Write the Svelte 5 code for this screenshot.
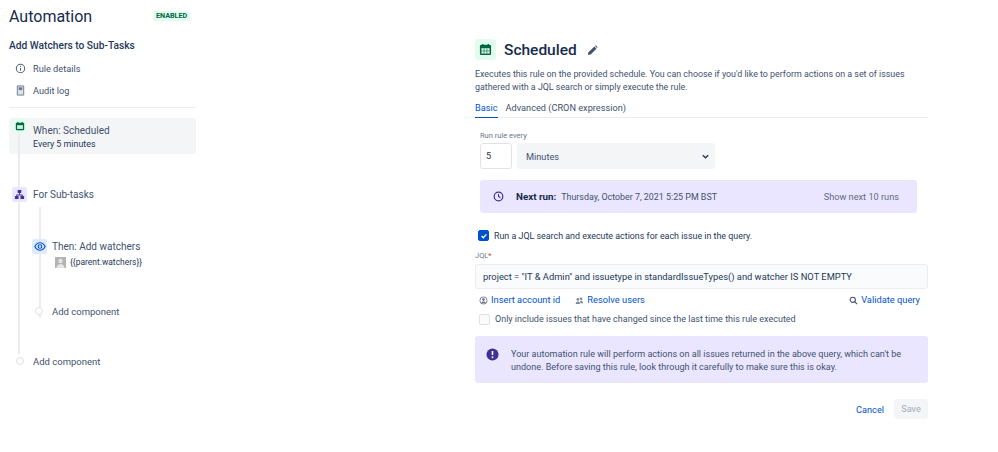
<script>
  const tabs = ['Basic', 'Advanced (CRON expression)'];
</script>

<div class="page">
  <aside class="side">
    <header class="head">
      <h1>Automation</h1>
      <span class="badge">ENABLED</span>
    </header>
    <h2>Add Watchers to Sub-Tasks</h2>
    <div class="nav">
      <div class="navrow">
        <svg class="navicon" viewBox="0 0 12 12" width="11" height="11"><circle cx="6" cy="6" r="4.600" fill="none" stroke="#505f79" stroke-width="1.100"/><path d="M6 5.400v3M6 3.400v1" stroke="#505f79" stroke-width="1.100"/></svg>
        <span>Rule details</span>
      </div>
      <div class="navrow">
        <svg class="navicon" viewBox="0 0 12 12" width="11" height="11"><path d="M2.500 1h7v10h-7z" fill="#dfe1e6" stroke="#6b778c" stroke-width="1"/><path d="M4 2.500h4v3H4z" fill="#6b778c"/></svg>
        <span>Audit log</span>
      </div>
    </div>
    <hr />
    <div class="trigger">
      <span class="tile green">
        <svg viewBox="0 0 12 12" width="10" height="10"><rect x="1" y="2" width="10" height="9" rx="1" fill="#006644"/><rect x="2.500" y="5" width="7" height="4.500" fill="#c9f3e0"/><path d="M3.500 1v2M8.500 1v2" stroke="#006644" stroke-width="1.200"/></svg>
      </span>
      <div class="trigtext">
        <div class="t1">When: Scheduled</div>
        <div class="t2">Every 5 minutes</div>
      </div>
      <span class="stem"></span>
    </div>
    <div class="tree">
      <div class="node branch">
        <span class="tile purple">
          <svg viewBox="0 0 12 12" width="11" height="11" fill="#403294"><rect x="4" y="1" width="4" height="3.400" rx=".5"/><rect x="1" y="7.600" width="4" height="3.400" rx=".5"/><rect x="7" y="7.600" width="4" height="3.400" rx=".5"/><path d="M5.500 4h1v2h3v2h-1V7h-5v1h-1V6h3z"/></svg>
        </span>
        <span class="t1">For Sub-tasks</span>
      </div>
      <div class="inner">
        <div class="node then">
          <span class="tile blue">
            <svg viewBox="0 0 14 12" width="12" height="11"><path d="M1 6c1.500-3 3.600-4.400 6-4.400S11.500 3 13 6c-1.500 3-3.600 4.400-6 4.400S2.500 9 1 6z" fill="none" stroke="#0052cc" stroke-width="1.300"/><circle cx="7" cy="6" r="2.100" fill="none" stroke="#0052cc" stroke-width="1.300"/></svg>
          </span>
          <div>
            <div class="t1">Then: Add watchers</div>
            <div class="watch">
              <span class="avatar">
                <svg viewBox="0 0 11 11" width="11" height="11"><rect width="11" height="11" fill="#b3b3b3"/><circle cx="5.500" cy="4" r="2.200" fill="#e4e4e4"/><path d="M1.500 11c.3-3 2-4 4-4s3.700 1 4 4z" fill="#e4e4e4"/></svg>
              </span>
              <span>{'{{parent.watchers}}'}</span>
            </div>
          </div>
        </div>
        <div class="add add-inner"><span class="dot"></span><span>Add component</span></div>
      </div>
      <div class="add add-outer"><span class="dot"></span><span>Add component</span></div>
    </div>
  </aside>

  <main class="main">
    <div class="title">
      <span class="bigtile">
        <svg viewBox="0 0 14 14" width="13" height="13"><rect x="1" y="2" width="12" height="11" rx="1.500" fill="#006644"/><rect x="2.600" y="5.600" width="8.800" height="5.800" fill="#d6f5e6"/><path d="M4 1v2.500M10 1v2.500" stroke="#006644" stroke-width="1.400"/><path d="M2.600 8.500h8.800M5.500 5.600v5.800M8.500 5.600v5.800" stroke="#006644" stroke-width=".6"/></svg>
      </span>
      <span class="titletext">Scheduled</span>
      <svg class="pencil" viewBox="0 0 12 12" width="11" height="11"><path d="M1 11l.7-3L8 1.700 10.300 4 4 10.300z" fill="#42526e"/><path d="M8.800 1l.7-.6 2.100 2.100-.7.800z" fill="#42526e"/></svg>
    </div>
    <p class="desc">Executes this rule on the provided schedule. You can choose if you'd like to perform actions on a set of issues gathered with a JQL search or simply execute the rule.</p>
    <nav class="tabs">
      {#each tabs as tab, i}
        <span class="tab" class:active={i === 0}>{tab}</span>
      {/each}
    </nav>

    <div class="form">
      <div class="lbl">Run rule every</div>
      <div class="runrow">
        <div class="num">5</div>
        <div class="select">
          <span>Minutes</span>
          <svg viewBox="0 0 10 10" width="9" height="9"><path d="M2 3.500 5 6.500l3-3" fill="none" stroke="#253858" stroke-width="1.500"/></svg>
        </div>
      </div>
      <div class="nextrun">
        <svg viewBox="0 0 12 12" width="11" height="11"><circle cx="6" cy="6" r="4.700" fill="none" stroke="#403294" stroke-width="1.300"/><path d="M6 3.200V6l2 1.300" fill="none" stroke="#403294" stroke-width="1.200"/></svg>
        <b>Next run:</b>
        <span class="date">Thursday, October 7, 2021 5:25 PM BST</span>
        <span class="show">Show next 10 runs</span>
      </div>
    </div>

    <label class="check first">
      <span class="box on">
        <svg viewBox="0 0 10 10" width="8" height="8"><path d="M2 5l2.200 2.200L8 3" fill="none" stroke="#fff" stroke-width="1.600"/></svg>
      </span>
      <span>Run a JQL search and execute actions for each issue in the query.</span>
    </label>
    <div class="lbl jql">JQL<em>*</em></div>
    <div class="input">project = "IT &amp; Admin" and issuetype in standardIssueTypes() and watcher IS NOT EMPTY</div>
    <div class="links">
      <span class="link">
        <svg viewBox="0 0 10 10" width="9" height="9"><circle cx="5" cy="5" r="4" fill="none" stroke="#6b778c" stroke-width="1"/><circle cx="5" cy="4" r="1.500" fill="#6b778c"/><path d="M2.500 8c.4-1.300 1.300-1.800 2.500-1.800S7.100 6.700 7.500 8z" fill="#6b778c"/></svg>
        Insert account id
      </span>
      <span class="link">
        <svg viewBox="0 0 10 10" width="9" height="9" fill="#7a869a"><circle cx="3.200" cy="3.800" r="1.500"/><circle cx="6.800" cy="3" r="1.400"/><path d="M.8 9c0-2 1-3 2.400-3s2.400 1 2.400 3z"/><path d="M5.500 5.500c.6-.5 2.800-.8 3.700 2.500H6.300z"/></svg>
        Resolve users
      </span>
      <span class="link right">
        <svg viewBox="0 0 10 10" width="9" height="9"><circle cx="4.200" cy="4.200" r="2.900" fill="none" stroke="#42526e" stroke-width="1.200"/><path d="M6.300 6.300 9 9" stroke="#42526e" stroke-width="1.300"/></svg>
        Validate query
      </span>
    </div>
    <label class="check second">
      <span class="box"></span>
      <span>Only include issues that have changed since the last time this rule executed</span>
    </label>
    <div class="warn">
      <svg viewBox="0 0 14 14" width="13" height="13"><circle cx="7" cy="7" r="6.500" fill="#403294"/><path d="M7 3.200v4.300" stroke="#fff" stroke-width="1.700"/><circle cx="7" cy="10" r="1" fill="#fff"/></svg>
      <p>Your automation rule will perform actions on all issues returned in the above query, which can't be undone. Before saving this rule, look through it carefully to make sure this is okay.</p>
    </div>
    <div class="actions">
      <span class="cancel">Cancel</span>
      <span class="save">Save</span>
    </div>
  </main>
</div>

<style>
  :global(body) {
    margin: 0;
    background: #fff;
  }
  .page {
    width: 998px;
    height: 452px;
    box-sizing: border-box;
    display: grid;
    grid-template-columns: 187px 453px;
    column-gap: 279px;
    padding-left: 9px;
    font-family: Roboto, "Open Sans", sans-serif;
    font-size: 9.200px;
    color: #253858;
    overflow: hidden;
  }
  .head {
    display: flex;
    align-items: center;
    height: 33px;
  }
  h1 {
    margin: 0;
    width: 144px;
    font-size: 16px;
    font-weight: 400;
    color: #172b4d;
    line-height: 33px;
  }
  .badge {
    background: #e3fcef;
    color: #006644;
    font-size: 7.200px;
    font-weight: 700;
    padding: 1px 3px;
    border-radius: 2px;
    line-height: 8px;
    margin-top: -2px;
  }
  h2 {
    margin: 4px 0 0;
    font-size: 10.200px;
    font-weight: 500;
    color: #253858;
    line-height: 17px;
  }
  .nav {
    margin-top: 3px;
  }
  .navrow {
    display: flex;
    align-items: center;
    height: 22px;
    padding-left: 6px;
    gap: 7px;
    color: #42526e;
  }
  hr {
    border: 0;
    border-top: 1px solid #ebecf0;
    margin: 6px 0 10px;
  }
  .trigger {
    position: relative;
    display: flex;
    height: 36px;
    background: #f4f5f7;
    border-radius: 3px;
    padding-left: 3px;
    gap: 6px;
  }
  .tile {
    flex: none;
    width: 15px;
    height: 15px;
    border-radius: 2px;
    display: flex;
    align-items: center;
    justify-content: center;
    z-index: 1;
  }
  .green { background: #e3fcef; }
  .purple { background: #eae6ff; }
  .blue { background: #deebff; }
  .trigtext {
    padding-top: 5px;
  }
  .t1 {
    font-size: 10px;
    line-height: 15px;
    color: #42526e;
  }
  .t2 {
    font-size: 8.900px;
    line-height: 12px;
    color: #253858;
  }
  .stem {
    position: absolute;
    left: 9px;
    top: 15px;
    height: 21px;
    width: 2px;
    background: #ebecf0;
  }
  .tree {
    position: relative;
    padding-top: 32px;
  }
  .tree::before {
    content: "";
    position: absolute;
    left: 9px;
    top: 0;
    bottom: 8px;
    width: 2px;
    background: #ebecf0;
  }
  .node {
    display: flex;
    gap: 5px;
  }
  .branch {
    padding-left: 3px;
    gap: 6px;
    align-items: center;
  }
  .branch .t1 {
    padding-top: 1px;
  }
  .inner {
    position: relative;
    padding-left: 23px;
    padding-top: 37px;
  }
  .inner::before {
    content: "";
    position: absolute;
    left: 30px;
    top: 5px;
    bottom: 0;
    width: 2px;
    background: #ebecf0;
  }
  .then {
    position: relative;
  }
  .watch {
    display: flex;
    align-items: center;
    gap: 4px;
    margin-left: 3px;
    height: 16px;
    font-size: 8.450px;
    color: #253858;
  }
  .avatar {
    display: flex;
  }
  .dot {
    position: relative;
    z-index: 1;
    width: 8px;
    height: 8px;
    border: 1px solid #dfe1e6;
    border-radius: 50%;
    background: #fff;
    box-sizing: border-box;
    flex: none;
  }
  .add {
    display: flex;
    align-items: center;
    gap: 9px;
    font-size: 9.500px;
    color: #42526e;
    position: relative;
    height: 14px;
  }
  .add-inner {
    margin-top: 34px;
    margin-left: 3px;
  }
  .add-outer {
    margin-top: 36px;
    margin-left: 7px;
    background: #fff;
  }
  .main {
    padding-top: 39px;
  }
  .title {
    display: flex;
    align-items: center;
    height: 21px;
  }
  .bigtile {
    width: 21px;
    height: 21px;
    background: #e3fcef;
    border-radius: 3px;
    display: flex;
    align-items: center;
    justify-content: center;
  }
  .titletext {
    font-size: 15.500px;
    font-weight: 500;
    color: #172b4d;
    margin-left: 8px;
    padding-top: 1px;
  }
  .pencil {
    margin-left: 10px;
    margin-top: 1px;
  }
  .desc {
    margin: 8px 0 0;
    line-height: 13px;
    font-size: 8.870px;
    color: #42526e;
  }
  .tabs {
    display: flex;
    gap: 8px;
    margin-top: 5px;
    border-bottom: 1px solid #ebecf0;
    height: 18px;
    box-sizing: content-box;
  }
  .tab {
    line-height: 18px;
    color: #42526e;
    height: 18px;
    box-sizing: content-box;
  }
  .tab.active {
    color: #0052cc;
    border-bottom: 1px solid #0052cc;
  }
  .form {
    padding-left: 5px;
    margin-top: 13px;
    width: 437px;
  }
  .lbl {
    font-size: 7.500px;
    color: #6b778c;
    line-height: 10px;
  }
  .runrow {
    display: flex;
    gap: 5px;
    margin-top: 2px;
  }
  .num {
    width: 32px;
    height: 26px;
    box-sizing: border-box;
    border: 1px solid #dfe1e6;
    border-radius: 3px;
    padding-left: 5px;
    line-height: 24px;
    color: #253858;
  }
  .select {
    width: 198px;
    height: 26px;
    background: #f4f5f7;
    border-radius: 3px;
    display: flex;
    align-items: center;
    justify-content: space-between;
    padding: 0 5px 0 9px;
    box-sizing: border-box;
    color: #42526e;
  }
  .nextrun {
    display: flex;
    align-items: center;
    height: 33px;
    margin-top: 11px;
    background: #eae6ff;
    border-radius: 3px;
    padding: 0 18px 0 13px;
    color: #42526e;
  }
  .nextrun b {
    color: #172b4d;
    font-weight: 700;
    font-size: 9.800px;
    margin-left: 12px;
  }
  .date {
    margin-left: 5px;
    font-size: 8.900px;
  }
  .show {
    margin-left: auto;
    color: #5e6c84;
  }
  .check {
    display: flex;
    align-items: center;
    gap: 5px;
    color: #253858;
  }
  .first {
    margin-top: 17px;
    padding-left: 3px;
    font-size: 8.900px;
  }
  .box {
    width: 9px;
    height: 9px;
    border: 1px solid #dfe1e6;
    background: #fafbfc;
    border-radius: 2px;
    box-sizing: content-box;
    display: flex;
    align-items: center;
    justify-content: center;
  }
  .box.on {
    background: #0052cc;
    border-color: #0052cc;
  }
  .jql {
    margin-top: 10px;
  }
  .jql em {
    color: #de350b;
    font-style: normal;
  }
  .input {
    margin-top: 3px;
    height: 25px;
    box-sizing: border-box;
    border: 1px solid #ebecf0;
    background: #fafbfc;
    border-radius: 3px;
    padding-left: 7px;
    line-height: 23px;
    font-size: 9.350px;
    color: #253858;
  }
  .links {
    display: flex;
    gap: 15px;
    margin-top: 3px;
    padding: 0 8px 0 4px;
    line-height: 16px;
    font-size: 9.300px;
  }
  .link {
    color: #0052cc;
    display: flex;
    align-items: center;
    gap: 3px;
  }
  .right {
    margin-left: auto;
  }
  .second {
    margin-top: 4px;
    padding-left: 4px;
    line-height: 14px;
    font-size: 9px;
    color: #42526e;
  }
  .warn {
    display: flex;
    gap: 12px;
    margin-top: 10px;
    background: #eae6ff;
    border-radius: 3px;
    height: 47px;
    box-sizing: border-box;
    padding: 12px 20px 0 11px;
    font-size: 9.050px;
  }
  .warn p {
    margin: 0;
    line-height: 13px;
    color: #42526e;
  }
  .warn svg {
    flex: none;
  }
  .actions {
    display: flex;
    justify-content: flex-end;
    align-items: center;
    gap: 10px;
    margin-top: 16px;
  }
  .cancel {
    color: #0052cc;
  }
  .save {
    width: 34px;
    height: 20px;
    background: #f4f5f7;
    border-radius: 3px;
    color: #a5adba;
    text-align: center;
    line-height: 20px;
  }
</style>
